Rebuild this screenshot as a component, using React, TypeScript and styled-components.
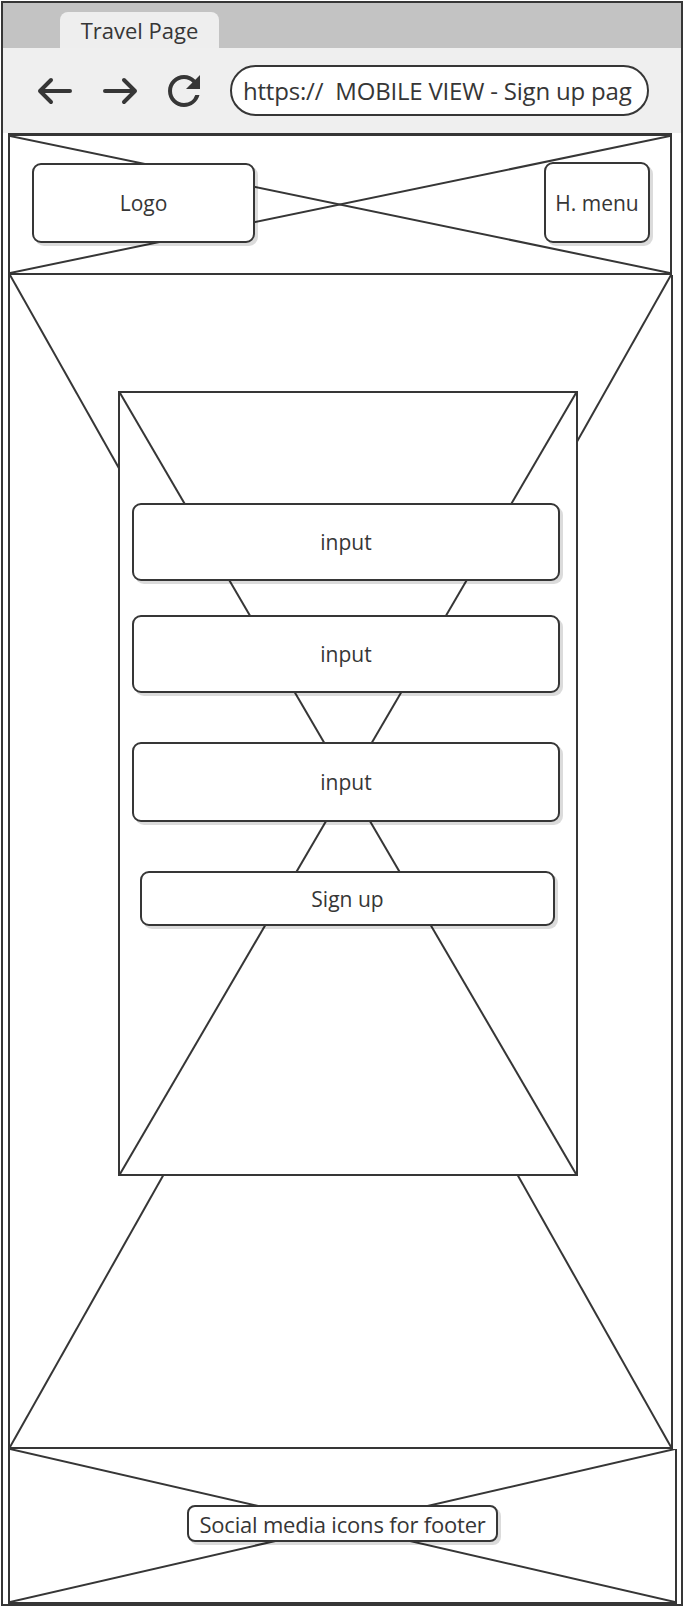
import React from "react";
import styled, { createGlobalStyle } from "styled-components";
import { MdRefresh } from "react-icons/md";

const ink = "#363636";

const GlobalStyle = createGlobalStyle`
  body {
    margin: 0;
    background: #fff;
    font-family: "Open Sans", "Noto Sans", sans-serif;
    font-weight: 500;
    color: ${ink};
  }
`;

const Frame = styled.div`
  width: 678px;
  margin: 1px;
  border: 2px solid ${ink};
  display: flex;
  flex-direction: column;
`;

const TabBar = styled.div`
  height: 45px;
  background: #c3c3c3;
  padding-left: 57px;
  display: flex;
  align-items: flex-end;
`;

const Tab = styled.div`
  width: 159px;
  height: 36px;
  background: #eeeeee;
  border-radius: 8px 8px 0 0;
  display: flex;
  align-items: center;
  justify-content: center;
  font-size: 22px;
`;

const Toolbar = styled.div`
  height: 85px;
  background: #efefef;
  padding-left: 34px;
  display: flex;
  align-items: center;
  gap: 29px;
`;

const NavIcon = styled.svg`
  display: block;
  flex: none;
`;

const Reload = styled(MdRefresh)`
  flex: none;
  margin: 0 -7px;
`;

const UrlBar = styled.div`
  width: 404px;
  height: 47px;
  border: 2px solid ${ink};
  border-radius: 26px;
  background: #fff;
  display: flex;
  align-items: center;
  padding-left: 11px;
  box-sizing: content-box;
  overflow: hidden;
  white-space: pre;
  font-size: 24px;
  letter-spacing: -0.2px;
`;

const Section = styled.div<{ $height: number; $right: number; $top?: boolean }>`
  position: relative;
  height: ${(p) => p.$height}px;
  margin: 0 ${(p) => p.$right}px 0 5px;
  border: 2px solid ${ink};
  border-top-width: ${(p) => (p.$top ? 3 : 0)}px;
  box-sizing: border-box;
`;

const Cross = styled.svg`
  position: absolute;
  inset: 0;
  width: 100%;
  height: 100%;
  line {
    stroke: ${ink};
    stroke-width: 2;
  }
`;

const Layer = styled.div`
  position: relative;
  height: 100%;
  box-sizing: border-box;
`;

const HeaderRow = styled(Layer)`
  display: flex;
  align-items: center;
  justify-content: space-between;
  padding: 0 20px 4px 22px;
`;

const Box = styled.div<{ $w: number; $h: number }>`
  width: ${(p) => p.$w}px;
  height: ${(p) => p.$h}px;
  box-sizing: border-box;
  border: 2px solid ${ink};
  border-radius: 9px;
  background: #fff;
  box-shadow: 3px 3px 0 rgba(0, 0, 0, 0.14);
  display: flex;
  align-items: center;
  justify-content: center;
  font-size: 21px;
  white-space: nowrap;
  flex: none;
`;

const MainArea = styled(Layer)`
  padding: 116px 0 0 108px;
`;

const FormBox = styled.div`
  position: relative;
  width: 460px;
  height: 785px;
  box-sizing: border-box;
  border: 2px solid ${ink};
  background: #fff;
`;

const FormStack = styled(Layer)`
  display: flex;
  flex-direction: column;
  padding: 110px 0 0 12px;
`;

const Field = styled(Box)<{ $gap: number; $indent?: number }>`
  margin-top: ${(p) => p.$gap}px;
  margin-left: ${(p) => p.$indent ?? 0}px;
`;

const FooterArea = styled(Layer)`
  display: flex;
  align-items: center;
  justify-content: center;
  padding-bottom: 4px;
`;

const Label = styled(Box)`
  border-radius: 8px;
  font-size: 22px;
  letter-spacing: -0.2px;
`;

const X = () => (
  <Cross>
    <line x1="0" y1="0" x2="100%" y2="100%" />
    <line x1="100%" y1="0" x2="0" y2="100%" />
  </Cross>
);

const Arrow = ({ dir }: { dir: "left" | "right" }) => (
  <NavIcon width="36" height="28" viewBox="0 0 36 28">
    <path
      d={
        dir === "left"
          ? "M33 14H3M14 3L3 14L14 25"
          : "M3 14H33M22 3L33 14L22 25"
      }
      fill="none"
      stroke={ink}
      strokeWidth="4"
      strokeLinecap="round"
      strokeLinejoin="round"
    />
  </NavIcon>
);

export default function App() {
  return (
    <>
      <GlobalStyle />
      <Frame>
        <TabBar>
          <Tab>Travel Page</Tab>
        </TabBar>
        <Toolbar>
          <Arrow dir="left" />
          <Arrow dir="right" />
          <Reload size={48} color={ink} />
          <UrlBar>https://  MOBILE VIEW - Sign up pag</UrlBar>
        </Toolbar>

        <Section $height={142} $right={9} $top>
          <X />
          <HeaderRow>
            <Box $w={223} $h={80}>Logo</Box>
            <Box $w={106} $h={81}>H. menu</Box>
          </HeaderRow>
        </Section>

        <Section $height={1174} $right={8}>
          <X />
          <MainArea>
            <FormBox>
              <X />
              <FormStack>
                <Field $w={428} $h={78} $gap={0}>input</Field>
                <Field $w={428} $h={78} $gap={34}>input</Field>
                <Field $w={428} $h={80} $gap={49}>input</Field>
                <Field $w={415} $h={55} $gap={49} $indent={8}>Sign up</Field>
              </FormStack>
            </FormBox>
          </MainArea>
        </Section>

        <Section $height={155} $right={4}>
          <X />
          <FooterArea>
            <Label $w={311} $h={37}>Social media icons for footer</Label>
          </FooterArea>
        </Section>
      </Frame>
    </>
  );
}
